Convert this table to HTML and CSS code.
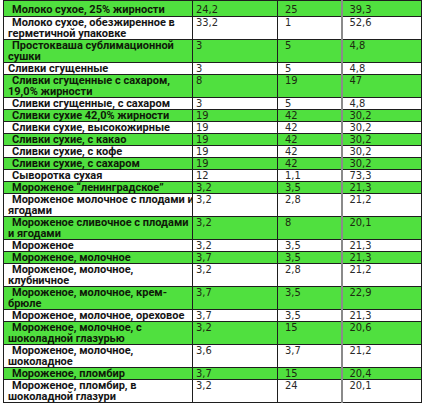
FILE: index.html
```html
<!DOCTYPE html>
<html>
<head>
<meta charset="utf-8">
<link rel="stylesheet" href="styles.css">
</head>
<body>
<table class="tbl">
<colgroup><col class="c1"><col class="c2"><col class="c3"><col class="c4"></colgroup>
<tr class="g first"><td class="name">Молоко сухое, 25% жирности</td><td>24,2</td><td>25</td><td>39,3</td></tr>
<tr class="w"><td class="name">Молоко сухое, обезжиренное в<br>герметичной упаковке</td><td>33,2</td><td>1</td><td>52,6</td></tr>
<tr class="g"><td class="name">Простокваша сублимационной<br>сушки</td><td>3</td><td>5</td><td>4,8</td></tr>
<tr class="w"><td class="name flat">Сливки сгущенные</td><td>3</td><td>5</td><td>4,8</td></tr>
<tr class="g"><td class="name">Сливки сгущенные с сахаром,<br>19,0% жирности</td><td>8</td><td>19</td><td>47</td></tr>
<tr class="w"><td class="name">Сливки сгущенные, с сахаром</td><td>3</td><td>5</td><td>4,8</td></tr>
<tr class="g"><td class="name">Сливки сухие 42,0% жирности</td><td>19</td><td>42</td><td>30,2</td></tr>
<tr class="w"><td class="name">Сливки сухие, высокожирные</td><td>19</td><td>42</td><td>30,2</td></tr>
<tr class="g"><td class="name">Сливки сухие, с какао</td><td>19</td><td>42</td><td>30,2</td></tr>
<tr class="w"><td class="name">Сливки сухие, с кофе</td><td>19</td><td>42</td><td>30,2</td></tr>
<tr class="g"><td class="name">Сливки сухие, с сахаром</td><td>19</td><td>42</td><td>30,2</td></tr>
<tr class="w"><td class="name">Сыворотка сухая</td><td>12</td><td>1,1</td><td>73,3</td></tr>
<tr class="g"><td class="name">Мороженое “ленинградское”</td><td>3,2</td><td>3,5</td><td>21,3</td></tr>
<tr class="w"><td class="name">Мороженое молочное с плодами и<br>ягодами</td><td>3,2</td><td>2,8</td><td>21,2</td></tr>
<tr class="g"><td class="name">Мороженое сливочное с плодами<br>и ягодами</td><td>3,2</td><td>8</td><td>20,1</td></tr>
<tr class="w"><td class="name">Мороженое</td><td>3,2</td><td>3,5</td><td>21,3</td></tr>
<tr class="g"><td class="name">Мороженое, молочное</td><td>3,7</td><td>3,5</td><td>21,3</td></tr>
<tr class="w"><td class="name">Мороженое, молочное,<br>клубничное</td><td>3,2</td><td>2,8</td><td>21,2</td></tr>
<tr class="g"><td class="name">Мороженое, молочное, крем-<br>брюле</td><td>3,7</td><td>3,5</td><td>22,9</td></tr>
<tr class="w"><td class="name">Мороженое, молочное, ореховое</td><td>3,7</td><td>3,5</td><td>21,3</td></tr>
<tr class="g"><td class="name">Мороженое, молочное, с<br>шоколадной глазурью</td><td>3,2</td><td>15</td><td>20,6</td></tr>
<tr class="w"><td class="name">Мороженое, молочное,<br>шоколадное</td><td>3,6</td><td>3,7</td><td>21,2</td></tr>
<tr class="g"><td class="name">Мороженое, пломбир</td><td>3,7</td><td>15</td><td>20,4</td></tr>
<tr class="w"><td class="name">Мороженое, пломбир, в<br>шоколадной глазури</td><td>3,2</td><td>24</td><td>20,1</td></tr>
</table>
</body>
</html>
```
FILE: styles.css
```css
html, body {
  margin: 0;
  padding: 0;
  background: #ffffff;
}
.tbl {
  border-collapse: collapse;
  margin-left: 3px;
  width: 418px;
  table-layout: fixed;
  font-family: "DejaVu Sans Condensed", "DejaVu Sans", sans-serif;
  font-size: 11px;
  line-height: 11px;
  color: #2a2a2a;
}
.c1 { width: 189px; }
.c2 { width: 85px; }
.c3 { width: 64px; }
.c4 { width: 80px; }
.tbl td {
  border: 1px solid #1e1e1e;
  padding: 0 0 0 3px;
  vertical-align: top;
}
.tbl td:nth-child(3),
.tbl td:nth-child(4) {
  padding-left: 7px;
}
.tbl td:nth-child(4) {
  border-left: 2px solid #8a8a8a;
}
.tbl td.name {
  font-family: Roboto, "Liberation Sans", sans-serif;
  font-size: 11px;
  font-weight: bold;
  color: #151515;
  padding-left: 4px;
  text-indent: 4px;
  white-space: nowrap;
  overflow: hidden;
}
.tbl td.name.flat {
  text-indent: 0;
}
.g td {
  background: #50e03f;
  color: #1c2a10;
}
.g td.name {
  color: #0e1a08;
}
.w td {
  background: #ffffff;
}
.first td {
  padding-top: 3px;
  padding-bottom: 1px;
}
```
